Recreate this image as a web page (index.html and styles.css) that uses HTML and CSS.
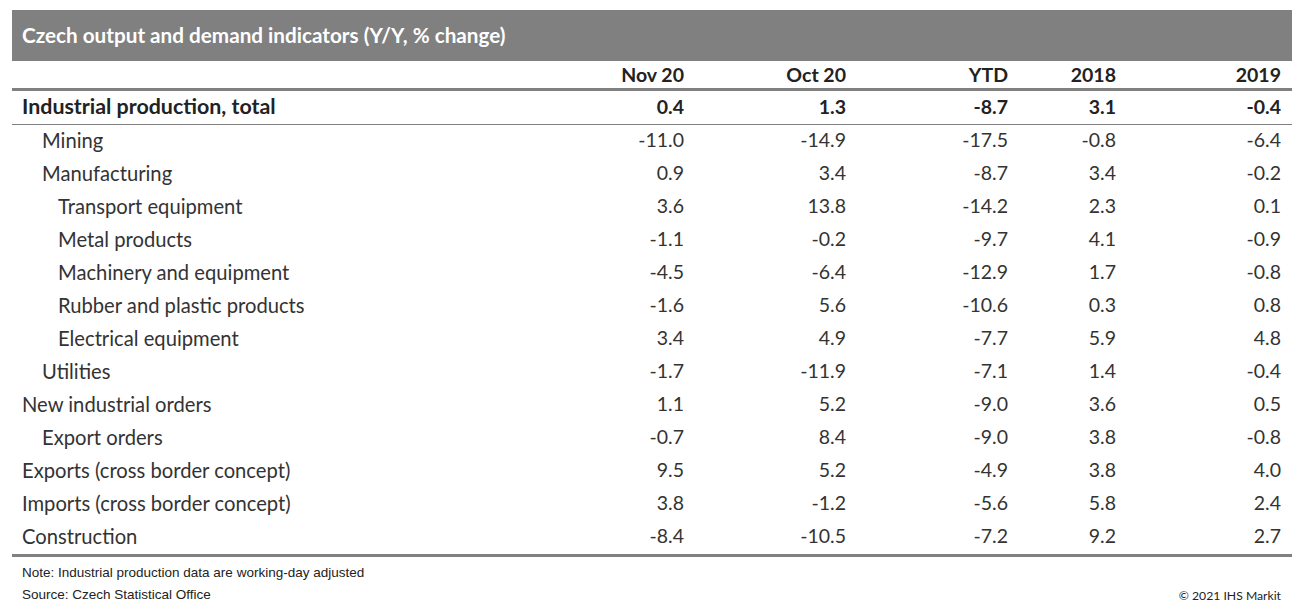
FILE: index.html
```html
<!DOCTYPE html>
<html>
<head>
<meta charset="utf-8">
<link rel="stylesheet" href="styles.css">
</head>
<body>
<div class="wrap">
  <div class="title">Czech output and demand indicators (Y/Y, % change)</div>
  <div class="grid head">
    <div class="lbl"></div><div class="num">Nov 20</div><div class="num">Oct 20</div><div class="num">YTD</div><div class="num">2018</div><div class="num">2019</div>
  </div>
  <div class="grid total">
    <div class="lbl">Industrial production, total</div><div class="num">0.4</div><div class="num">1.3</div><div class="num">-8.7</div><div class="num">3.1</div><div class="num">-0.4</div>
  </div>
  <div class="body">
    <div class="grid row"><div class="lbl i1">Mining</div><div class="num">-11.0</div><div class="num">-14.9</div><div class="num">-17.5</div><div class="num">-0.8</div><div class="num">-6.4</div></div>
    <div class="grid row"><div class="lbl i1">Manufacturing</div><div class="num">0.9</div><div class="num">3.4</div><div class="num">-8.7</div><div class="num">3.4</div><div class="num">-0.2</div></div>
    <div class="grid row"><div class="lbl i2">Transport equipment</div><div class="num">3.6</div><div class="num">13.8</div><div class="num">-14.2</div><div class="num">2.3</div><div class="num">0.1</div></div>
    <div class="grid row"><div class="lbl i2">Metal products</div><div class="num">-1.1</div><div class="num">-0.2</div><div class="num">-9.7</div><div class="num">4.1</div><div class="num">-0.9</div></div>
    <div class="grid row"><div class="lbl i2">Machinery and equipment</div><div class="num">-4.5</div><div class="num">-6.4</div><div class="num">-12.9</div><div class="num">1.7</div><div class="num">-0.8</div></div>
    <div class="grid row"><div class="lbl i2">Rubber and plastic products</div><div class="num">-1.6</div><div class="num">5.6</div><div class="num">-10.6</div><div class="num">0.3</div><div class="num">0.8</div></div>
    <div class="grid row"><div class="lbl i2">Electrical equipment</div><div class="num">3.4</div><div class="num">4.9</div><div class="num">-7.7</div><div class="num">5.9</div><div class="num">4.8</div></div>
    <div class="grid row"><div class="lbl i1">Utilities</div><div class="num">-1.7</div><div class="num">-11.9</div><div class="num">-7.1</div><div class="num">1.4</div><div class="num">-0.4</div></div>
    <div class="grid row"><div class="lbl">New industrial orders</div><div class="num">1.1</div><div class="num">5.2</div><div class="num">-9.0</div><div class="num">3.6</div><div class="num">0.5</div></div>
    <div class="grid row"><div class="lbl i1">Export orders</div><div class="num">-0.7</div><div class="num">8.4</div><div class="num">-9.0</div><div class="num">3.8</div><div class="num">-0.8</div></div>
    <div class="grid row"><div class="lbl">Exports (cross border concept)</div><div class="num">9.5</div><div class="num">5.2</div><div class="num">-4.9</div><div class="num">3.8</div><div class="num">4.0</div></div>
    <div class="grid row"><div class="lbl">Imports (cross border concept)</div><div class="num">3.8</div><div class="num">-1.2</div><div class="num">-5.6</div><div class="num">5.8</div><div class="num">2.4</div></div>
    <div class="grid row"><div class="lbl">Construction</div><div class="num">-8.4</div><div class="num">-10.5</div><div class="num">-7.2</div><div class="num">9.2</div><div class="num">2.7</div></div>
  </div>
  <div class="foot">
    <div class="note">Note: Industrial production data are working-day adjusted</div>
    <div class="srcline">
      <div class="note">Source: Czech Statistical Office</div>
      <div class="copy">© 2021 IHS Markit</div>
    </div>
  </div>
</div>
</body>
</html>
```
FILE: styles.css
```css
html, body { margin: 0; padding: 0; background: #fff; }
body { font-family: "Lato", "Noto Sans", sans-serif; color: #333; }
.wrap { padding: 10px 13px 0 12px; width: 1280px; }
.title {
  background: #808080; color: #fff; height: 51px; box-sizing: border-box;
  padding-left: 10px; padding-bottom: 2px; display: flex; align-items: center;
  font-weight: 700; font-size: 20.7px;
}
.grid { display: grid; grid-template-columns: 521px 162px 162px 162px 108px 165px; align-items: center; }
.lbl { padding-left: 10px; white-space: nowrap; }
.num { text-align: right; padding-right: 11px; }
.head { height: 27px; border-bottom: 3px solid #808080; font-weight: 700; font-size: 19.5px; padding-bottom: 1px; box-sizing: border-box; height: 30px; color: #222; }
.total { height: 34px; box-sizing: border-box; padding-bottom: 3px; border-bottom: 1px solid #808080; font-weight: 700; font-size: 19.5px; color: #222; }
.total .lbl { font-size: 21.4px; }
.row { height: 33px; box-sizing: border-box; padding-bottom: 4px; font-size: 19.5px; }
.row .lbl { font-size: 20.2px; }
.body { border-bottom: 3px solid #808080; }
.i1 { padding-left: 30px; }
.i2 { padding-left: 46px; }
.foot { padding: 5px 11px 0 10px; }
.note { font-family: "Liberation Sans", Arial, sans-serif; font-size: 13.5px; color: #222; line-height: 22px; }
.srcline { display: flex; justify-content: space-between; align-items: center; }
.copy { font-size: 12.2px; color: #222; }
```
